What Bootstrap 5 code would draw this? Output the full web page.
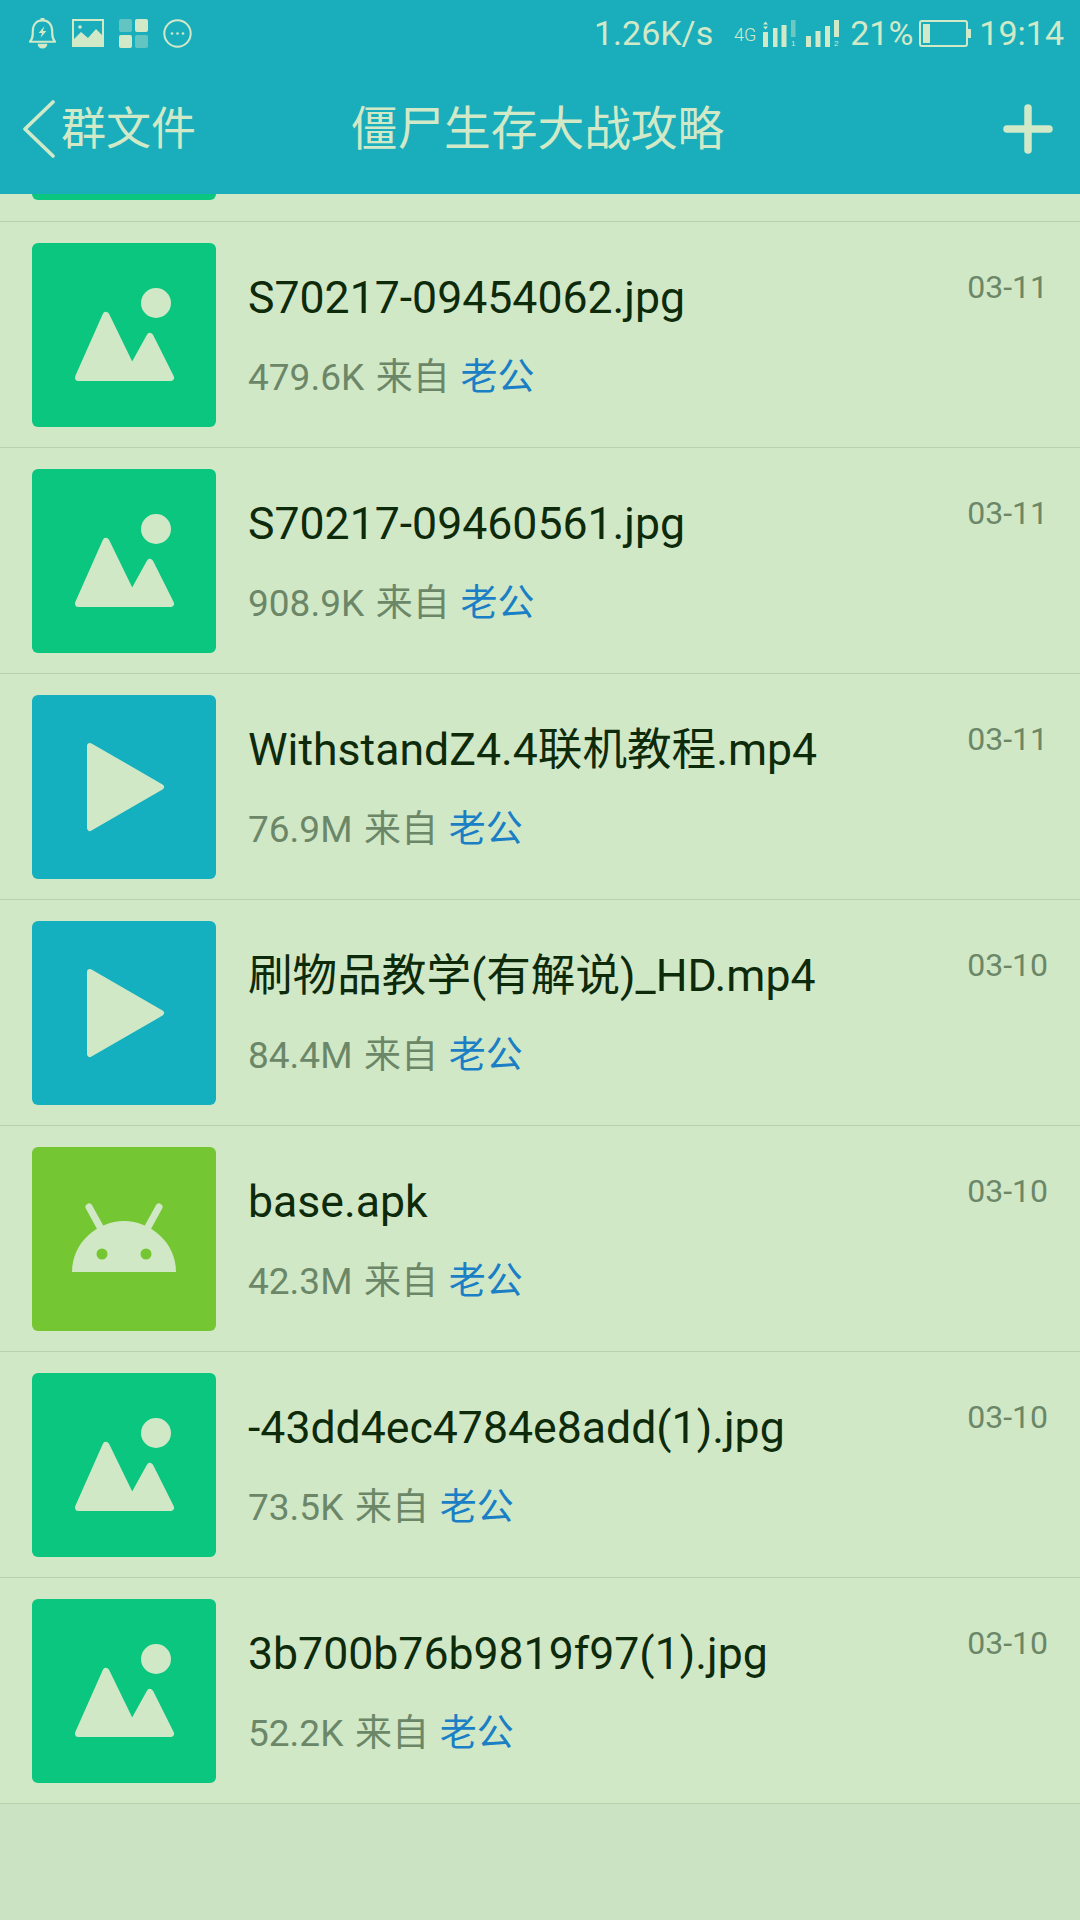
<!DOCTYPE html>
<html lang="zh">
<head>
  <meta charset="UTF-8" />
  <meta name="viewport" content="width=device-width, initial-scale=1.0" />
  <title>群文件</title>
  <link href="https://cdn.jsdelivr.net/npm/bootstrap@5.3.2/dist/css/bootstrap.min.css" rel="stylesheet" />
  <style>
    body { width: 1080px; height: 1920px; overflow: hidden; background: #cbe3c2; font-family: Roboto, "Noto Sans CJK SC", sans-serif; }
    .topbar { background: #1aaebc; color: #d2e9c8; height: 194px; }
    .status-row { height: 62px; padding: 4px 16px 0 28px; }
    .status-icons { gap: 15px; }
    .status-text { font-size: 34px; line-height: 1; font-weight: 400; }
    .st-gap-sm { margin-left: 6px; }
    .st-gap-md { margin-left: 10px; }
    .st-gap-lg { margin-left: 21px; }
    .nav-row { height: 132px; padding: 2px 27px 0 22px; display: grid; grid-template-columns: 1fr auto 1fr; align-items: center; }
    .back-label { font-size: 45px; line-height: 1; font-weight: 400; margin-left: 6px; }
    .page-title { font-size: 46.7px; line-height: 1; font-weight: 400; }
    .file-list { background: transparent; border-radius: 0; }
    .file-row { height: 226px; padding: 21px 32px 0 32px; background: #d1e8c7; border-color: #bad1af; gap: 32px; }
    .file-list .file-row:last-child { border-bottom-width: 1px; }
    .file-row.sliver { height: 28px; padding: 0 0 0 32px; }
    .sliver-thumb { width: 184px; height: 6px; background: #0ac67e; border-radius: 0 0 6px 6px; }
    .thumb { width: 184px; height: 184px; border-radius: 6px; flex: none; display: block; }
    .thumb-img { background: #0ac67e; }
    .thumb-video { background: #14b0c0; }
    .thumb-apk { background: #74c632; }
    .file-name { font-size: 44.6px; line-height: 50px; color: #0d2a0a; margin-top: 30px; white-space: nowrap; }
    .file-meta { font-size: 37px; line-height: 44px; color: #6b8767; margin-top: 33px; white-space: nowrap; word-spacing: 2.5px; }
    .file-from { color: #1a7fc4; margin-left: -1px; }
    .file-date { font-size: 32px; line-height: 40px; color: #6b8767; margin-top: 24px; }
    .mini-num { font-size: 8px; fill: #d2e9c8; font-family: "Liberation Sans", sans-serif; }
  </style>
</head>
<body>
  <svg width="0" height="0" class="d-block">
    <symbol id="ic-img" viewBox="0 0 184 184">
      <circle cx="124" cy="60" r="15" fill="#d1e8c7" />
      <path d="M46.500 134.500 L74 72.500 L100 126 L118 93.500 L138.500 134.500 Z" fill="#d1e8c7" stroke="#d1e8c7" stroke-width="7" stroke-linejoin="round" />
    </symbol>
    <symbol id="ic-play" viewBox="0 0 184 184">
      <path d="M58 51 L129 92 L58 133 Z" fill="#d1e8c7" stroke="#d1e8c7" stroke-width="6" stroke-linejoin="round" />
    </symbol>
    <symbol id="ic-apk" viewBox="0 0 184 184">
      <path d="M40 125 C40 96 65 74 92 74 C119 74 144 96 144 125 Z" fill="#d1e8c7" />
      <path d="M57 60 L68 80 M127 60 L116 80" stroke="#d1e8c7" stroke-width="7" stroke-linecap="round" />
      <circle cx="70" cy="107" r="5.5" fill="#74c632" />
      <circle cx="114" cy="107" r="5.5" fill="#74c632" />
    </symbol>
  </svg>

  <header class="topbar">
    <div class="status-row d-flex align-items-center justify-content-between">
      <div class="d-flex align-items-center status-icons">
        <svg width="29" height="34" viewBox="0 0 30 34">
          <path d="M2 26 C5 23 5 20 5 15 C5 8 9 4 15 4 C21 4 25 8 25 15 C25 20 25 23 28 26 Z" fill="none" stroke="#d2e9c8" stroke-width="2.2" stroke-linejoin="round" />
          <path d="M13 1.5h4v3h-4z M10 28h10c0 3-2 5-5 5s-5-2-5-5z" fill="#d2e9c8" />
          <path d="M17 10 L11 17 H14.5 L13 22 L19 15 H15.5 Z" fill="#d2e9c8" />
        </svg>
        <svg width="32" height="28" viewBox="0 0 32 28">
          <rect x="1" y="1" width="30" height="26" fill="none" stroke="#d2e9c8" stroke-width="2" />
          <circle cx="8" cy="8" r="1.8" fill="#d2e9c8" />
          <path d="M2 26 V20 L9 13 L16 19 L24 10 L30 16 V26 Z" fill="#d2e9c8" />
        </svg>
        <svg width="29" height="29" viewBox="0 0 29 29">
          <rect x="0" y="0" width="13" height="13" rx="2" fill="#d2e9c8" opacity=".4" />
          <rect x="16" y="0" width="13" height="13" rx="2" fill="#d2e9c8" />
          <rect x="0" y="16" width="13" height="13" rx="2" fill="#d2e9c8" />
          <rect x="16" y="16" width="13" height="13" rx="2" fill="#d2e9c8" opacity=".4" />
        </svg>
        <svg width="29" height="29" viewBox="0 0 29 29">
          <circle cx="14.5" cy="14.5" r="13.2" fill="none" stroke="#d2e9c8" stroke-width="2" />
          <circle cx="9" cy="14.5" r="1.3" fill="#d2e9c8" />
          <circle cx="14.5" cy="14.5" r="1.3" fill="#d2e9c8" />
          <circle cx="20" cy="14.5" r="1.3" fill="#d2e9c8" />
        </svg>
      </div>
      <div class="d-flex align-items-center">
        <span class="status-text">1.26K/s</span>
        <svg class="st-gap-lg" width="62" height="27" viewBox="0 0 62 27">
          <text x="0" y="21" font-size="18" fill="#d2e9c8" font-family="Roboto, sans-serif" font-weight="300">4G</text>
          <path d="M29 4.5 l2.5 -3 2.5 3z M29 6.5 l2.5 3 2.5 -3z" fill="#d2e9c8" />
          <path d="M29 12h5v15h-5z M39 8h4.500v19h-4.500z M47.500 5h5v22h-5z" fill="#d2e9c8" />
          <rect x="57" y="0" width="4.500" height="17" fill="#d2e9c8" opacity=".45" />
          <text x="57" y="25.500" class="mini-num">1</text>
        </svg>
        <svg class="st-gap-md" width="34" height="27" viewBox="0 0 34 27">
          <path d="M0 16h5v11h-5z M9.500 11h5v16h-5z M19 6h5v21h-5z M28 0h5v17h-5z" fill="#d2e9c8" />
          <text x="28" y="25.500" class="mini-num">2</text>
        </svg>
        <span class="status-text st-gap-md">21%</span>
        <svg class="st-gap-sm" width="52" height="27" viewBox="0 0 52 27">
          <rect x="1" y="1" width="47" height="25" rx="2" fill="none" stroke="#d2e9c8" stroke-width="2" />
          <rect x="4" y="4" width="7" height="19" fill="#d2e9c8" />
          <path d="M49 9h3v9h-3z" fill="#d2e9c8" />
        </svg>
        <span class="status-text ms-2">19:14</span>
      </div>
    </div>
    <div class="nav-row">
      <div class="d-flex align-items-center">
        <svg width="33" height="58" viewBox="0 0 33 58">
          <path d="M31 2 L3 29 L31 56" fill="none" stroke="#d2e9c8" stroke-width="3.6" stroke-linecap="round" stroke-linejoin="round" />
        </svg>
        <span class="back-label">群文件</span>
      </div>
      <div class="page-title text-center">僵尸生存大战攻略</div>
      <div class="d-flex justify-content-end">
        <svg width="50" height="50" viewBox="0 0 50 50">
          <path d="M25 4 V46 M4 25 H46" stroke="#d2e9c8" stroke-width="7.500" stroke-linecap="round" />
        </svg>
      </div>
    </div>
  </header>

  <div class="list-group list-group-flush file-list">
    <div class="list-group-item file-row sliver"><div class="sliver-thumb"></div></div>

    <div class="list-group-item file-row d-flex">
      <svg class="thumb thumb-img"><use href="#ic-img" /></svg>
      <div class="flex-grow-1">
        <div class="file-name">S70217-09454062.jpg</div>
        <div class="file-meta">479.6K 来自 <span class="file-from">老公</span></div>
      </div>
      <div class="file-date">03-11</div>
    </div>

    <div class="list-group-item file-row d-flex">
      <svg class="thumb thumb-img"><use href="#ic-img" /></svg>
      <div class="flex-grow-1">
        <div class="file-name">S70217-09460561.jpg</div>
        <div class="file-meta">908.9K 来自 <span class="file-from">老公</span></div>
      </div>
      <div class="file-date">03-11</div>
    </div>

    <div class="list-group-item file-row d-flex">
      <svg class="thumb thumb-video"><use href="#ic-play" /></svg>
      <div class="flex-grow-1">
        <div class="file-name">WithstandZ4.4联机教程.mp4</div>
        <div class="file-meta">76.9M 来自 <span class="file-from">老公</span></div>
      </div>
      <div class="file-date">03-11</div>
    </div>

    <div class="list-group-item file-row d-flex">
      <svg class="thumb thumb-video"><use href="#ic-play" /></svg>
      <div class="flex-grow-1">
        <div class="file-name">刷物品教学(有解说)_HD.mp4</div>
        <div class="file-meta">84.4M 来自 <span class="file-from">老公</span></div>
      </div>
      <div class="file-date">03-10</div>
    </div>

    <div class="list-group-item file-row d-flex">
      <svg class="thumb thumb-apk"><use href="#ic-apk" /></svg>
      <div class="flex-grow-1">
        <div class="file-name">base.apk</div>
        <div class="file-meta">42.3M 来自 <span class="file-from">老公</span></div>
      </div>
      <div class="file-date">03-10</div>
    </div>

    <div class="list-group-item file-row d-flex">
      <svg class="thumb thumb-img"><use href="#ic-img" /></svg>
      <div class="flex-grow-1">
        <div class="file-name">-43dd4ec4784e8add(1).jpg</div>
        <div class="file-meta">73.5K 来自 <span class="file-from">老公</span></div>
      </div>
      <div class="file-date">03-10</div>
    </div>

    <div class="list-group-item file-row d-flex">
      <svg class="thumb thumb-img"><use href="#ic-img" /></svg>
      <div class="flex-grow-1">
        <div class="file-name">3b700b76b9819f97(1).jpg</div>
        <div class="file-meta">52.2K 来自 <span class="file-from">老公</span></div>
      </div>
      <div class="file-date">03-10</div>
    </div>
  </div>

  <script src="https://cdn.jsdelivr.net/npm/bootstrap@5.3.2/dist/js/bootstrap.bundle.min.js"></script>
</body>
</html>
